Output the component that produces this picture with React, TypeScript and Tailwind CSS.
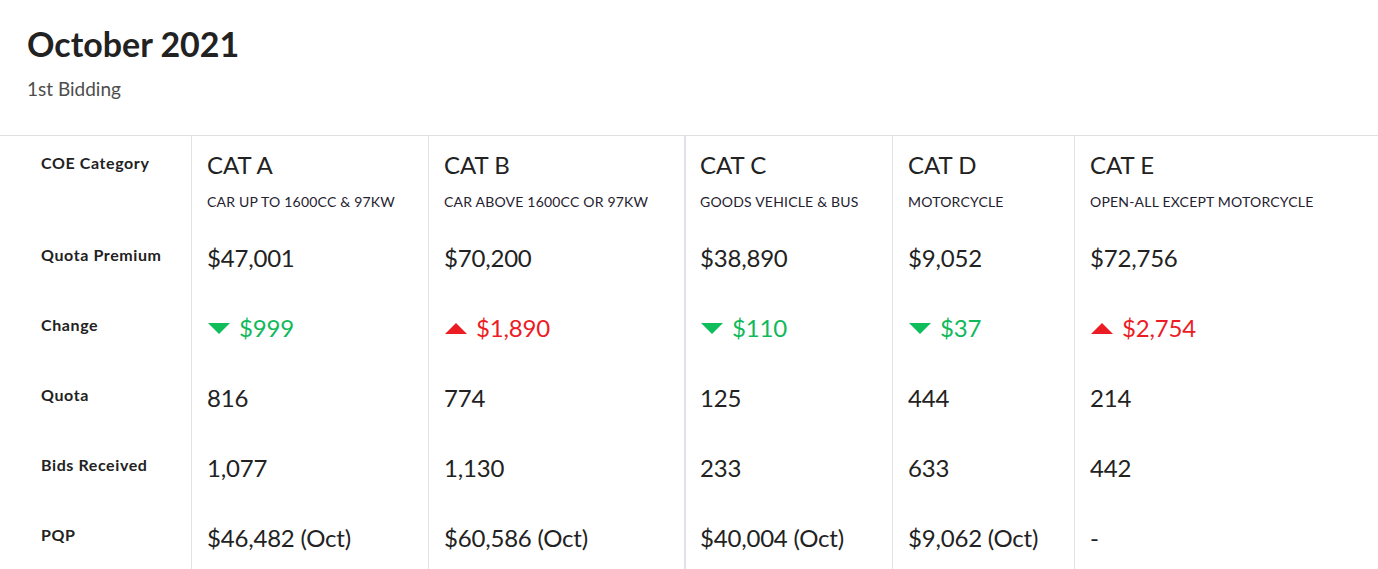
import React from "react";

type Cat = {
  name: string;
  desc: string;
  premium: string;
  change: string;
  up: boolean;
  quota: string;
  bids: string;
  pqp: string;
};

const cats: Cat[] = [
  { name: "CAT A", desc: "CAR UP TO 1600CC & 97KW", premium: "$47,001", change: "$999", up: false, quota: "816", bids: "1,077", pqp: "$46,482 (Oct)" },
  { name: "CAT B", desc: "CAR ABOVE 1600CC OR 97KW", premium: "$70,200", change: "$1,890", up: true, quota: "774", bids: "1,130", pqp: "$60,586 (Oct)" },
  { name: "CAT C", desc: "GOODS VEHICLE & BUS", premium: "$38,890", change: "$110", up: false, quota: "125", bids: "233", pqp: "$40,004 (Oct)" },
  { name: "CAT D", desc: "MOTORCYCLE", premium: "$9,052", change: "$37", up: false, quota: "444", bids: "633", pqp: "$9,062 (Oct)" },
  { name: "CAT E", desc: "OPEN-ALL EXCEPT MOTORCYCLE", premium: "$72,756", change: "$2,754", up: true, quota: "214", bids: "442", pqp: "-" },
];

// column C has the slightly heavier divider
const colBorder = [
  "border-l border-[#e3e3e3] pl-[15px]",
  "border-l border-[#e3e3e3] pl-[15px]",
  "border-l-2 border-[#dfe3e8] pl-[14px]",
  "border-l border-[#e3e3e3] pl-[15px]",
  "border-l border-[#e3e3e3] pl-[15px]",
];

function Triangle({ up }: { up: boolean }) {
  return (
    <svg width="22" height="11" viewBox="0 0 22 11" className="shrink-0">
      {up ? (
        <polygon points="11,0 22,11 0,11" fill="#ec1c24" />
      ) : (
        <polygon points="0,0 22,0 11,11" fill="#0fbd5a" />
      )}
    </svg>
  );
}

function Label({ children, header }: { children: React.ReactNode; header?: boolean }) {
  return (
    <div className={`pl-[41px] ${header ? "pt-[17px]" : "pt-[19px]"} text-[16px] leading-5 font-bold tracking-[0.6px] text-[#222]`}>
      {children}
    </div>
  );
}

const rows: { label: string; key: keyof Cat }[] = [
  { label: "Quota Premium", key: "premium" },
  { label: "Change", key: "change" },
  { label: "Quota", key: "quota" },
  { label: "Bids Received", key: "bids" },
  { label: "PQP", key: "pqp" },
];

export default function App() {
  return (
    <div className="w-full bg-white text-[#222] font-['Lato',sans-serif]">
      <div className="pt-6 pl-[27px] pb-8 border-b border-[#e0e0e0]">
        <h1 className="text-[34px] leading-10 font-bold text-[#222]">October 2021</h1>
        <p className="mt-[11px] text-[19px] leading-7 text-[#4d4d4d]">1st Bidding</p>
      </div>

      <div className="grid grid-cols-[191px_237px_256px_208px_182px_1fr]">
        <div className="h-[90px]">
          <Label header>COE Category</Label>
        </div>
        {cats.map((c, i) => (
          <div key={c.name} className={`h-[90px] pt-[13px] ${colBorder[i]}`}>
            <div className="text-[24px] leading-8">{c.name}</div>
            <div className="mt-[11px] text-[14px] leading-5 tracking-[0.2px] text-[#1f2230]">{c.desc}</div>
          </div>
        ))}

        {rows.map((r) => (
          <React.Fragment key={r.label}>
            <div className="h-[70px]">
              <Label>{r.label}</Label>
            </div>
            {cats.map((c, i) => (
              <div key={c.name} className={`h-[70px] pt-4 ${colBorder[i]}`}>
                {r.key === "change" ? (
                  <div className="flex items-center gap-[9px] pl-[1px] h-8">
                    <Triangle up={c.up} />
                    <span className={`text-[24px] leading-8 tracking-[-0.2px] ${c.up ? "text-[#ec1c24]" : "text-[#10b95b]"}`}>
                      {c.change}
                    </span>
                  </div>
                ) : (
                  <div className="text-[24px] leading-8 tracking-[-0.2px]">{c[r.key]}</div>
                )}
              </div>
            ))}
          </React.Fragment>
        ))}
      </div>
    </div>
  );
}
